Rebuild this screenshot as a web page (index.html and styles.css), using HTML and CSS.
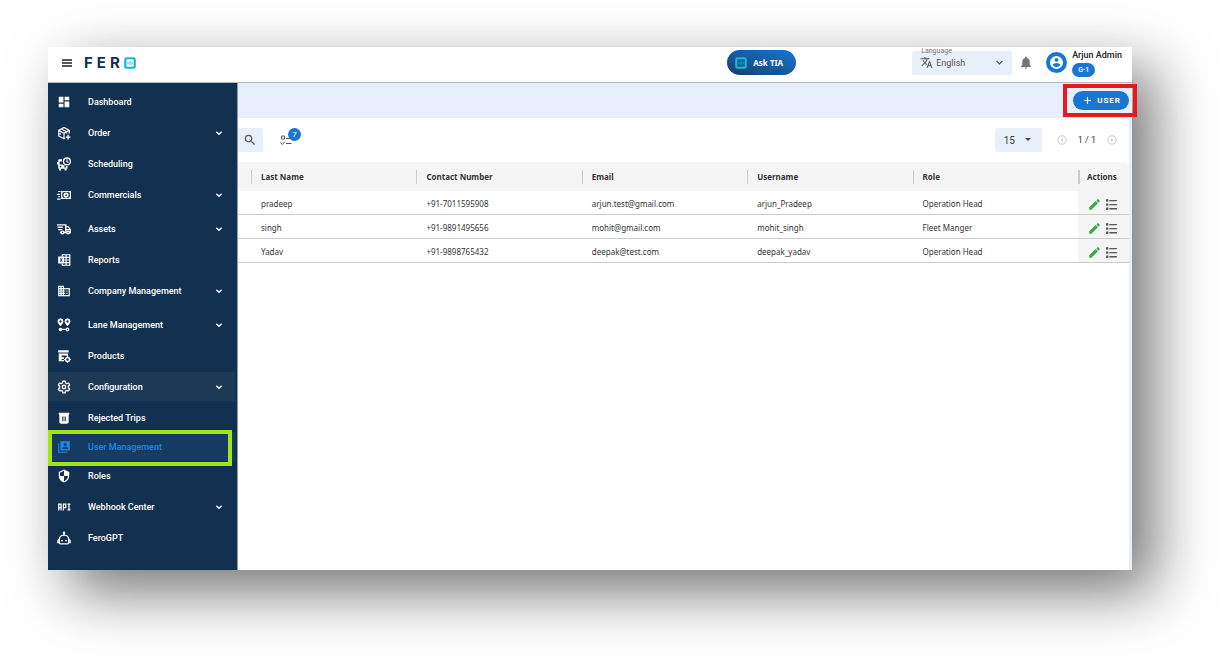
FILE: index.html
```html
<!DOCTYPE html>
<html lang="en">
<head>
    <meta charset="UTF-8">
    <meta name="viewport" content="width=device-width, initial-scale=1.0">
    <title>Fero - User Management</title>
    <link rel="stylesheet" href="styles.css">
</head>
<body>
    <!-- Icons used more than once -->
    <svg class="icon-defs" aria-hidden="true">
        <symbol id="chevron" viewBox="0 0 24 24"><path d="M4 8l8 8 8-8" fill="none" stroke="currentColor" stroke-width="4"/></symbol>
        <symbol id="pencil" viewBox="1 1 22 22"><path d="M3 17.25V21h3.75L17.81 9.94l-3.75-3.75L3 17.25zM20.71 7.04a1 1 0 0 0 0-1.41l-2.34-2.34a1 1 0 0 0-1.41 0l-1.83 1.83 3.75 3.75 1.83-1.83z" fill="currentColor"/></symbol>
        <symbol id="list" viewBox="0 0 24 24"><path d="M8 3.500h14v2.500H8zM8 11h14v2.500H8zM8 18.500h14V21H8zM2 2.500h4V7H2zM2 10h4v4.500H2zM2 17.500h4V22H2z" fill="currentColor"/></symbol>
    </svg>

    <div class="app">
        <header class="topbar">
            <button class="menu-btn" aria-label="Toggle menu">
                <svg viewBox="0 0 12 10"><path d="M1 2h10M1 5h10M1 8h10" stroke="currentColor" stroke-width="1.300"/></svg>
            </button>
            <a class="logo" href="#" aria-label="Fero home">
                <span>FER</span>
                <svg viewBox="0 0 12 12"><rect x="1.250" y="1.250" width="9.500" height="9.500" rx="1.500" fill="#e8fafc" stroke="#1bb8d0" stroke-width="2.200"/><path d="M4 5v2M6 4v4M8 5v2" stroke="#1bb8d0" stroke-width=".8"/></svg>
            </a>

            <button class="ask-btn">
                <svg viewBox="0 0 12 12"><rect x="1.250" y="1.250" width="9.500" height="9.500" rx="1" fill="#12609f" stroke="#1bb8d0" stroke-width="2"/><path d="M4 5v2M6 4v4M8 5v2" stroke="#1bb8d0" stroke-width=".8"/></svg>
                Ask TIA
            </button>

            <div class="language">
                <label for="language">Language</label>
                <svg class="language-icon" viewBox="0 0 24 24"><path d="M12.870 15.070l-2.540-2.510.030-.030A17.520 17.520 0 0 0 14.070 6H17V4h-7V2H8v2H1v2h11.170C11.500 7.920 10.440 9.750 9 11.350 8.070 10.320 7.300 9.190 6.690 8h-2c.730 1.630 1.730 3.170 2.980 4.560l-5.090 5.020L4 19l5-5 3.110 3.110.760-2.040zM18.500 10h-2L12 22h2l1.120-3h4.750L21 22h2l-4.500-12zm-2.620 7l1.620-4.330L19.120 17h-3.240z" fill="currentColor"/></svg>
                <select id="language">
                    <option>English</option>
                </select>
                <svg class="language-arrow" viewBox="0 0 24 24"><path d="M4 8l8 8 8-8" fill="none" stroke="currentColor" stroke-width="3"/></svg>
            </div>

            <button class="bell-btn" aria-label="Notifications">
                <svg viewBox="4 2 16 20"><path d="M12 22a2 2 0 0 0 2-2h-4a2 2 0 0 0 2 2zm6-6v-5c0-3.070-1.640-5.640-4.500-6.320V4a1.500 1.500 0 0 0-3 0v.680C7.630 5.360 6 7.920 6 11v5l-2 2v1h16v-1l-2-2z" fill="currentColor"/></svg>
            </button>

            <div class="profile">
                <span class="avatar">
                    <svg viewBox="2 2 20 20"><path d="M12 2a10 10 0 1 0 0 20 10 10 0 0 0 0-20zm0 3a3 3 0 1 1 0 6 3 3 0 0 1 0-6zm0 14.200a7.200 7.200 0 0 1-6-3.220c.030-1.990 4-3.080 6-3.080 1.990 0 5.970 1.090 6 3.080a7.200 7.200 0 0 1-6 3.220z" fill="#fff"/></svg>
                </span>
                <div class="profile-info">
                    <span class="profile-name">Arjun Admin</span>
                    <span class="profile-tag">G-1</span>
                </div>
            </div>
        </header>

        <div class="body">
            <nav class="sidebar">
                <a class="nav-item" href="#">
                    <svg viewBox="0 0 24 24"><path d="M3 13h8V3H3v10zm0 8h8v-6H3v6zm10 0h8V11h-8v10zm0-18v6h8V3h-8z" fill="currentColor"/></svg>
                    <span>Dashboard</span>
                </a>
                <a class="nav-item" href="#">
                    <svg viewBox="0 0 24 24"><path d="M21 13V7.500L12 2.500 3 7.500v9.500l9 5 2-1M3 7.500l9 5 9-5M12 12.500V22M7.500 5l9 5v3M5.500 12v3" fill="none" stroke="currentColor" stroke-width="2"/><path d="M19 15v8M15 19h8" stroke="currentColor" stroke-width="2.400"/></svg>
                    <span>Order</span>
                    <svg class="nav-arrow"><use href="#chevron"/></svg>
                </a>
                <a class="nav-item" href="#">
                    <svg viewBox="0 0 24 24"><path d="M9 4H4C2.500 4 2 5 2 6.500V9H0v4h2v6.500h1.500V23H7v-3h6v3h3.500v-3.500H18V15.500h-2A8.500 8.500 0 0 1 9 13H4.500V7.500H8.500C8.500 6 8.600 5 9 4zM6 15a1.500 1.500 0 1 1 0 3 1.500 1.500 0 0 1 0-3zm8 0a1.500 1.500 0 1 1 0 3 1.500 1.500 0 0 1 0-3z" fill="currentColor" fill-rule="evenodd"/><circle cx="17" cy="7.500" r="5.800" fill="none" stroke="currentColor" stroke-width="2.200"/><path d="M17 4V8l2.500 1.500" fill="none" stroke="currentColor" stroke-width="1.800"/></svg>
                    <span>Scheduling</span>
                </a>
                <a class="nav-item group-end" href="#">
                    <svg viewBox="0 0 24 24"><path d="M2 6h4M0 11h5M2 15h3M0 19h6" stroke="currentColor" stroke-width="2"/><path d="M7 5h17v14H7zM9 8v8c1.500 0 2 .500 2 1h9c0-.500.500-1 2-1V8c-1.500 0-2-.500-2-1h-9C11 7.500 10.500 8 9 8z" fill="currentColor" fill-rule="evenodd"/><circle cx="15.500" cy="12" r="3" fill="none" stroke="currentColor" stroke-width="3"/></svg>
                    <span>Commercials</span>
                    <svg class="nav-arrow"><use href="#chevron"/></svg>
                </a>
                <a class="nav-item" href="#">
                    <svg viewBox="0 0 24 24"><path d="M0 5h15v12M1 9h9M2 13h7M5 18h2M12 18h4M15 8h4l4 5v5h-1" fill="none" stroke="currentColor" stroke-width="2.400"/><path d="M15 13h8" stroke="currentColor" stroke-width="2"/><circle cx="9.500" cy="18" r="2.300" fill="none" stroke="currentColor" stroke-width="2.400"/><circle cx="19" cy="18" r="2.300" fill="none" stroke="currentColor" stroke-width="2.400"/></svg>
                    <span>Assets</span>
                    <svg class="nav-arrow"><use href="#chevron"/></svg>
                </a>
                <a class="nav-item" href="#">
                    <svg viewBox="0 0 24 24"><path d="M9 6V3h13v18H9v-3M9 7.500h13M12 12h10M12 16.500h10M15.500 3v18" fill="none" stroke="currentColor" stroke-width="2"/><path d="M2 6h10v12H2zM4.500 9l2 3-2 3h1.800L7.200 13.300 8.200 15H10l-2-3 2-3H8.200L7.200 10.700 6.300 9z" fill="currentColor" fill-rule="evenodd"/></svg>
                    <span>Reports</span>
                </a>
                <a class="nav-item group-end" href="#">
                    <svg viewBox="0 0 24 24"><path d="M12 7V3H2v18h20V7H12zM6 19H4v-2h2v2zm0-4H4v-2h2v2zm0-4H4V9h2v2zm0-4H4V5h2v2zm4 12H8v-2h2v2zm0-4H8v-2h2v2zm0-4H8V9h2v2zm0-4H8V5h2v2zm10 12h-8v-2h2v-2h-2v-2h2v-2h-2V9h8v10zm-2-8h-2v2h2v-2zm0 4h-2v2h2v-2z" fill="currentColor"/></svg>
                    <span>Company Management</span>
                    <svg class="nav-arrow"><use href="#chevron"/></svg>
                </a>
                <a class="nav-item" href="#">
                    <svg viewBox="0 0 24 24"><path d="M6 1a5 5 0 0 0-5 5c0 3.500 5 8 5 8s5-4.500 5-8a5 5 0 0 0-5-5zm0 3a2 2 0 1 1 0 4 2 2 0 0 1 0-4zM18 1a5 5 0 0 0-5 5c0 3.500 5 8 5 8s5-4.500 5-8a5 5 0 0 0-5-5zm0 3a2 2 0 1 1 0 4 2 2 0 0 1 0-4z" fill="currentColor" fill-rule="evenodd"/><circle cx="6" cy="19.500" r="3" fill="currentColor"/><circle cx="18" cy="19.500" r="2.200" fill="none" stroke="currentColor" stroke-width="2"/><path d="M8 19.500h8" stroke="currentColor" stroke-width="2"/></svg>
                    <span>Lane Management</span>
                    <svg class="nav-arrow"><use href="#chevron"/></svg>
                </a>
                <a class="nav-item" href="#">
                    <svg viewBox="0 0 24 24"><path d="M2 2h18v4H2zM3 7.500h16V13h-2.500v-2H8v3h4v3H8v2h4v2H3z" fill="currentColor"/><circle cx="18" cy="18" r="3.500" fill="none" stroke="currentColor" stroke-width="2.600"/><path d="M18 12.500v2M18 21.500v2M12.500 18h2M21.500 18h2" stroke="currentColor" stroke-width="2"/></svg>
                    <span>Products</span>
                </a>
                <a class="nav-item open" href="#">
                    <svg viewBox="0 0 24 24"><path d="M10 2h4l.6 3 2.200 1.200 2.900-1 2 3.500-2.300 2v2.600l2.300 2-2 3.500-2.900-1-2.200 1.200-.6 3h-4l-.6-3-2.200-1.200-2.900 1-2-3.500 2.300-2v-2.600l-2.300-2 2-3.500 2.900 1L9.400 5z" fill="none" stroke="currentColor" stroke-width="2.200" stroke-linejoin="round"/><circle cx="12" cy="12" r="3" fill="none" stroke="currentColor" stroke-width="2.200"/></svg>
                    <span>Configuration</span>
                    <svg class="nav-arrow"><use href="#chevron"/></svg>
                </a>
                <a class="nav-item tight" href="#">
                    <svg viewBox="0 0 24 24"><path d="M3 3h18v3H3zM4 6h16v13a3 3 0 0 1-3 3H7a3 3 0 0 1-3-3zM9 9.500v8h2v-8zM13 9.500v8h2v-8z" fill="currentColor" fill-rule="evenodd"/></svg>
                    <span>Rejected Trips</span>
                </a>
                <a class="nav-item tight active" href="#" aria-current="page">
                    <svg viewBox="0 0 24 24"><path d="M3 6v15h15" fill="none" stroke="currentColor" stroke-width="2"/><path d="M6 2h16v16H6zM8.500 15.500h11v-1c0-2-3.500-3-5.500-3s-5.500 1-5.500 3zM14 4.500a2.800 2.800 0 1 0 0 5.600 2.800 2.800 0 0 0 0-5.600z" fill="currentColor" fill-rule="evenodd"/></svg>
                    <span>User Management</span>
                </a>
                <a class="nav-item" href="#">
                    <svg viewBox="0 0 24 24"><path d="M12 1L3 5v6c0 5.550 3.840 10.740 9 12 5.160-1.260 9-6.450 9-12V5l-9-4zm0 10.990h7c-.530 4.120-3.280 7.790-7 8.940V12H5V6.300l7-3.110v8.800z" fill="currentColor"/></svg>
                    <span>Roles</span>
                </a>
                <a class="nav-item" href="#">
                    <svg viewBox="0 0 24 24"><path d="M3 18V7h4v11M3 13h4M11 18V7h4v6h-4M18 7h5M18 17h5M20.500 7v10" fill="none" stroke="currentColor" stroke-width="2.200"/></svg>
                    <span>Webhook Center</span>
                    <svg class="nav-arrow"><use href="#chevron"/></svg>
                </a>
                <a class="nav-item" href="#">
                    <svg viewBox="0 0 24 24"><path d="M12 3v5M4 14a8 7 0 0 1 16 0M4 13.500l-2.500 3V20H4M20 13.500l2.500 3V20H20M4 14v6c0 1 .500 2 2 2h12c1.500 0 2-1 2-2v-6" fill="none" stroke="currentColor" stroke-width="2.200"/><circle cx="12" cy="3" r="2" fill="currentColor"/><path d="M7 16.500h3M14 16.500h3" stroke="currentColor" stroke-width="2"/></svg>
                    <span>FeroGPT</span>
                </a>
            </nav>

            <main class="content">
                <div class="action-bar">
                    <div class="add-user">
                        <button class="add-btn">
                            <svg viewBox="0 0 8 8"><path d="M4 0v8M0 4h8" stroke="currentColor" stroke-width="1.200"/></svg>
                            USER
                        </button>
                    </div>
                </div>

                <section class="panel">
                    <div class="filters">
                        <button class="search-btn" aria-label="Search">
                            <svg viewBox="0 0 24 24"><path d="M15.500 14h-.790l-.280-.270A6.470 6.470 0 0 0 16 9.500 6.500 6.500 0 1 0 9.500 16c1.610 0 3.090-.590 4.230-1.570l.270.280v.790l5 4.990L20.490 19l-4.990-5zm-6 0C7.010 14 5 11.990 5 9.500S7.010 5 9.500 5 14 7.010 14 9.500 11.990 14 9.500 14z" fill="currentColor"/></svg>
                        </button>
                        <button class="columns-btn" aria-label="Columns">
                            <svg viewBox="0 0 24 24"><path d="M3 4h6v6H3zM1 17l3.500 4L10 15M12 9h11M12 19h11" fill="none" stroke="currentColor" stroke-width="2"/></svg>
                            <span class="count">7</span>
                        </button>
                        <div class="page-size">
                            <select aria-label="Rows per page">
                                <option>15</option>
                            </select>
                            <svg viewBox="0 0 8 4"><path d="M1 0h6L4 3z" fill="currentColor"/></svg>
                        </div>
                        <div class="pager">
                            <button aria-label="Previous page">
                                <svg viewBox="0 0 12 12"><circle cx="6" cy="6" r="5" fill="none" stroke="currentColor"/><path d="M7 4v4L4.500 6z" fill="currentColor"/></svg>
                            </button>
                            <span>1 / 1</span>
                            <button aria-label="Next page">
                                <svg viewBox="0 0 12 12"><circle cx="6" cy="6" r="5" fill="none" stroke="currentColor"/><path d="M5 4v4l2.500-2z" fill="currentColor"/></svg>
                            </button>
                        </div>
                    </div>

                    <table class="users">
                        <colgroup>
                            <col class="col-edge">
                            <col span="5">
                            <col class="col-actions">
                        </colgroup>
                        <thead>
                            <tr>
                                <td></td>
                                <th><span>Last Name</span></th>
                                <th><span>Contact Number</span></th>
                                <th><span>Email</span></th>
                                <th><span>Username</span></th>
                                <th><span>Role</span></th>
                                <th class="actions"><span>Actions</span></th>
                            </tr>
                        </thead>
                        <tbody>
                            <tr>
                                <td></td>
                                <td>pradeep</td>
                                <td>+91-7011595908</td>
                                <td>arjun.test@gmail.com</td>
                                <td>arjun_Pradeep</td>
                                <td>Operation Head</td>
                                <td class="actions">
                                    <div class="row-actions">
                                        <button class="edit" aria-label="Edit"><svg><use href="#pencil"/></svg></button>
                                        <button aria-label="Details"><svg><use href="#list"/></svg></button>
                                    </div>
                                </td>
                            </tr>
                            <tr>
                                <td></td>
                                <td>singh</td>
                                <td>+91-9891495656</td>
                                <td>mohit@gmail.com</td>
                                <td>mohit_singh</td>
                                <td>Fleet Manger</td>
                                <td class="actions">
                                    <div class="row-actions">
                                        <button class="edit" aria-label="Edit"><svg><use href="#pencil"/></svg></button>
                                        <button aria-label="Details"><svg><use href="#list"/></svg></button>
                                    </div>
                                </td>
                            </tr>
                            <tr>
                                <td></td>
                                <td>Yadav</td>
                                <td>+91-9898765432</td>
                                <td>deepak@test.com</td>
                                <td>deepak_yadav</td>
                                <td>Operation Head</td>
                                <td class="actions">
                                    <div class="row-actions">
                                        <button class="edit" aria-label="Edit"><svg><use href="#pencil"/></svg></button>
                                        <button aria-label="Details"><svg><use href="#list"/></svg></button>
                                    </div>
                                </td>
                            </tr>
                        </tbody>
                    </table>
                </section>
            </main>
        </div>
    </div>
</body>
</html>
```

FILE: styles.css
```css
* {
    box-sizing: border-box;
}

body {
    display: flex;
    min-height: 100vh;
    margin: 0;
    padding: 47px 100px 95px 48px;
    background-color: #fff;
    font-family: Roboto, sans-serif;
    font-size: 9px;
    color: #333;
}

button,
select {
    border: none;
    padding: 0;
    background: none;
    font: inherit;
    color: inherit;
    cursor: pointer;
}

select {
    appearance: none;
}

svg {
    display: block;
    flex: none;
}

.icon-defs {
    position: absolute;
    width: 0;
    height: 0;
}

.app {
    flex: 1;
    display: flex;
    flex-direction: column;
    background-color: #fff;
    box-shadow: 22px 22px 56px rgba(0, 0, 0, 0.54);
}

/* Top bar */
.topbar {
    display: flex;
    align-items: center;
    height: 36px;
    padding: 0 10px 4px 13px;
    border-bottom: 1px solid #b5b8bc;
}

.menu-btn svg {
    width: 12px;
    height: 10px;
    color: #222;
}

.logo {
    display: flex;
    align-items: center;
    margin-left: 11px;
    font-family: Inter, sans-serif;
    font-size: 15px;
    font-weight: 700;
    letter-spacing: 4px;
    color: #12304f;
    text-decoration: none;
}

.logo svg {
    width: 12px;
    height: 12px;
}

.ask-btn {
    display: flex;
    align-items: center;
    gap: 6px;
    height: 25px;
    margin-left: auto;
    padding: 0 13px 0 8px;
    border-radius: 13px;
    background: linear-gradient(200deg, #1976d2, #12406f);
    font-family: "Noto Sans", sans-serif;
    font-weight: 700;
    font-size: 8px;
    color: #fff;
}

.ask-btn svg {
    width: 12px;
    height: 12px;
}

.language {
    position: relative;
    display: flex;
    align-items: center;
    width: 100px;
    height: 24px;
    margin-left: 116px;
    padding: 0 8px;
    border-radius: 2px;
    background-color: #e7effb;
    color: #555;
}

.language label {
    position: absolute;
    top: -5px;
    left: 9px;
    font-size: 7px;
    line-height: 10px;
    color: #777;
}

.language-icon {
    width: 13px;
    height: 13px;
}

.language select {
    flex: 1;
    min-width: 0;
    padding-left: 3px;
    font-size: 9px;
}

.language-arrow {
    width: 9px;
    height: 9px;
}

.bell-btn {
    margin-left: 9px;
    color: #757575;
}

.bell-btn svg {
    width: 10px;
    height: 13px;
}

.profile {
    display: flex;
    align-items: center;
    gap: 5px;
    margin-left: 15px;
}

.avatar {
    display: grid;
    place-items: center;
    width: 21px;
    height: 21px;
    border-radius: 50%;
    background-color: #1976d2;
}

.avatar svg {
    width: 13px;
    height: 13px;
}

.profile-info {
    display: flex;
    flex-direction: column;
    align-items: flex-start;
    gap: 2px;
}

.profile-name {
    font-size: 9px;
    line-height: 12px;
    font-weight: 500;
    color: #222;
}

.profile-tag {
    padding: 0 6px;
    border-radius: 7px;
    background-color: #1976d2;
    font-size: 7px;
    line-height: 14px;
    font-weight: 500;
    color: #fff;
}

/* Layout under the top bar */
.body {
    flex: 1;
    display: flex;
}

/* Sidebar */
.sidebar {
    width: 190px;
    padding: 4px 2px 0 0;
    border-right: 1px solid #8c9bac;
    background-color: #12304f;
}

.nav-item {
    position: relative;
    display: flex;
    align-items: center;
    height: 29px;
    margin-bottom: 2px;
    padding: 0 12px 0 9px;
    font-size: 9px;
    font-weight: 500;
    color: #fff;
    text-decoration: none;
}

.nav-item svg {
    width: 14px;
    height: 14px;
}

.nav-item span {
    flex: 1;
    margin-left: 17px;
}

.nav-item .nav-arrow {
    width: 8px;
    height: 8px;
}

.nav-item.group-end {
    margin-bottom: 5px;
}

.nav-item.tight {
    margin-bottom: 0;
}

.nav-item.open {
    background-color: #1c3956;
}

.nav-item.active {
    background-color: #153b62;
    color: #1e88e5;
}

/* Green callout around the current page */
.nav-item.active::after {
    content: "";
    position: absolute;
    inset: -2px 3px -5px 0;
    border: 4px solid #a0e516;
}

/* Content */
.content {
    flex: 1;
    display: flex;
    flex-direction: column;
    min-width: 0;
    padding-right: 3px;
    background-color: #e7effb;
}

.action-bar {
    display: flex;
    align-items: center;
    justify-content: flex-end;
    height: 35px;
}

.add-user {
    position: relative;
}

/* Red callout around the add button */
.add-user::after {
    content: "";
    position: absolute;
    inset: -7px -8px -7px -10px;
    border: 4px solid #e8191c;
    pointer-events: none;
}

.add-btn {
    display: flex;
    align-items: center;
    gap: 6px;
    height: 19px;
    padding: 0 8px 0 11px;
    border-radius: 10px;
    background-color: #1976d2;
    font-size: 8px;
    font-weight: 700;
    letter-spacing: 1px;
    color: #fff;
}

.add-btn svg {
    width: 7px;
    height: 7px;
}

.panel {
    flex: 1;
    border-top-right-radius: 5px;
    background-color: #fff;
}

.filters {
    display: flex;
    align-items: center;
    height: 44px;
    padding-right: 12px;
}

.search-btn {
    display: grid;
    place-items: center;
    width: 25px;
    height: 24px;
    padding-right: 2px;
    border-radius: 0 2px 2px 0;
    background-color: #e7effb;
    color: #555;
}

.search-btn svg {
    width: 14px;
    height: 14px;
}

.columns-btn {
    position: relative;
    margin-left: 17px;
    color: #555;
}

.columns-btn svg {
    width: 12px;
    height: 12px;
}

.count {
    position: absolute;
    top: -6px;
    left: 8px;
    width: 13px;
    border-radius: 50%;
    background-color: #1976d2;
    font-size: 8px;
    line-height: 13px;
    text-align: center;
    color: #fff;
}

.page-size {
    display: flex;
    align-items: center;
    width: 47px;
    height: 24px;
    margin-left: auto;
    padding: 0 10px 0 9px;
    border-radius: 2px;
    background-color: #e7effb;
    color: #444;
}

.page-size select {
    flex: 1;
    min-width: 0;
    font-size: 10px;
}

.page-size svg {
    width: 8px;
    height: 4px;
}

.pager {
    display: flex;
    align-items: center;
    gap: 11px;
    margin-left: 15px;
    font-size: 9px;
    color: #333;
}

.pager button {
    color: #bbb;
}

.pager svg {
    width: 10px;
    height: 10px;
}

/* Users table */
.users {
    width: 100%;
    table-layout: fixed;
    border-collapse: separate;
    border-spacing: 0;
    font-family: "Noto Sans", sans-serif;
    font-size: 8px;
    color: #333;
}

.col-edge {
    width: 13px;
}

.col-actions {
    width: 51px;
}

.users th,
.users td {
    padding: 0;
    text-align: left;
}

.users thead th,
.users thead td {
    height: 29px;
    background-color: #f5f5f5;
}

.users thead th:last-child {
    border-top-right-radius: 5px;
}

.users th span {
    display: block;
    padding-left: 9px;
    border-left: 1px solid #ccc;
    line-height: 14px;
}

.users th.actions span {
    padding-left: 7px;
    border-left-width: 2px;
}

.users tbody td {
    height: 24px;
    padding: 2px 0 0 10px;
    border-bottom: 1px solid #ccc;
}

.users tbody td:first-child {
    padding: 0;
}

.users tbody .actions {
    background-color: #f5f5f5;
}

.row-actions {
    display: flex;
    align-items: center;
    gap: 4px;
    padding-top: 2px;
}

.row-actions svg {
    width: 13px;
    height: 13px;
    color: #555;
}

.row-actions .edit svg {
    color: #3fa648;
}
```
